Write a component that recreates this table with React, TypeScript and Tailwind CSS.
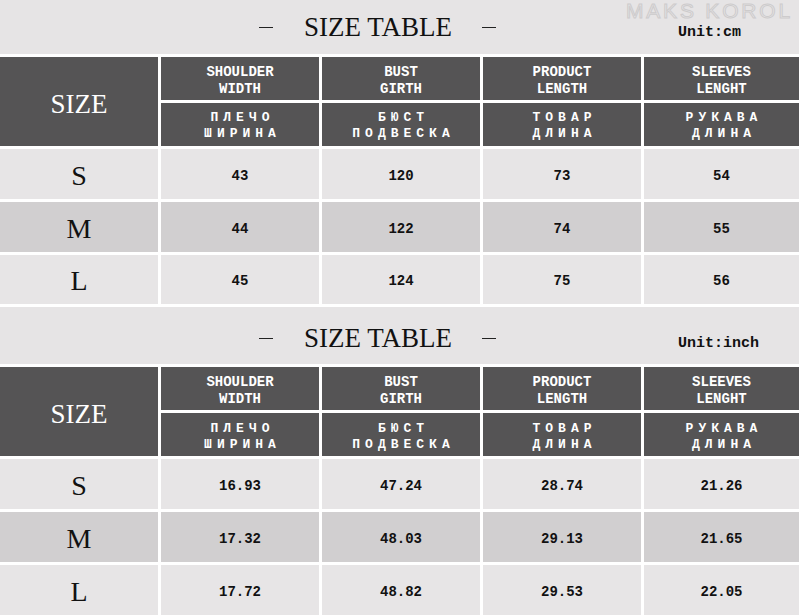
import React from 'react';

interface Column {
  en: [string, string];
  ru: [string, string];
}

interface SizeRow {
  size: string;
  values: string[];
}

const columns: Column[] = [
  { en: ['SHOULDER', 'WIDTH'], ru: ['ПЛЕЧО', 'ШИРИНА'] },
  { en: ['BUST', 'GIRTH'], ru: ['БЮСТ', 'ПОДВЕСКА'] },
  { en: ['PRODUCT', 'LENGTH'], ru: ['ТОВАР', 'ДЛИНА'] },
  { en: ['SLEEVES', 'LENGHT'], ru: ['РУКАВА', 'ДЛИНА'] },
];

const cmRows: SizeRow[] = [
  { size: 'S', values: ['43', '120', '73', '54'] },
  { size: 'M', values: ['44', '122', '74', '55'] },
  { size: 'L', values: ['45', '124', '75', '56'] },
];

const inchRows: SizeRow[] = [
  { size: 'S', values: ['16.93', '47.24', '28.74', '21.26'] },
  { size: 'M', values: ['17.32', '48.03', '29.13', '21.65'] },
  { size: 'L', values: ['17.72', '48.82', '29.53', '22.05'] },
];

const serif = "font-['Liberation_Serif','Times_New_Roman',serif]";
const mono = "font-['Liberation_Mono','Courier_New',monospace]";

function TitleBand({ unit, tall }: { unit: string; tall?: boolean }) {
  return (
    <div
      className={`relative flex items-center bg-[#e6e4e5] pl-[259px] ${
        tall ? 'h-[58px] pt-[6px]' : 'h-[55px] pt-[1px]'
      }`}
    >
      <div className="flex items-center">
        <div className="h-[1.5px] w-[14px] bg-[#222]" />
        <div className={`${serif} ml-[31px] mr-[30px] text-[27px] leading-none text-[#111]`}>
          SIZE TABLE
        </div>
        <div className="h-[1.5px] w-[14px] bg-[#222]" />
      </div>
      <div className={`${mono} ml-auto mt-[10px] w-[121px] text-[15px] font-bold leading-none text-[#111]`}>
        {unit}
      </div>
      {!tall && (
        <div className="absolute left-[626px] top-0 font-['Liberation_Sans',Arial,sans-serif] text-[21px] leading-none tracking-[2.8px] text-transparent [-webkit-text-stroke:1px_#cdcbcc]">
          MAKS KOROL
        </div>
      )}
    </div>
  );
}

function SizeTable({ rows, lastRow }: { rows: SizeRow[]; lastRow: string }) {
  return (
    <div
      className={`grid grid-cols-[158px_158px_158px_158px_155px] gap-[3px] bg-white ${
        lastRow === '49px'
          ? 'grid-rows-[43px_43px_50px_50px_49px]'
          : 'grid-rows-[43px_43px_50px_50px_50px]'
      }`}
    >
      <div className={`${serif} row-span-2 flex items-center justify-center bg-[#555455] pt-[5px] text-[27px] text-white`}>
        SIZE
      </div>
      {columns.map((c) => (
        <div
          key={c.en[0]}
          className={`${mono} flex flex-col items-center justify-center bg-[#555455] pt-[5px] text-[14px] font-bold leading-[17px] text-white`}
        >
          <span>{c.en[0]}</span>
          <span>{c.en[1]}</span>
        </div>
      ))}
      {columns.map((c) => (
        <div
          key={c.ru[0] + c.ru[1]}
          className={`${mono} flex flex-col items-center justify-center bg-[#555455] pl-[5px] pt-[4px] text-[13px] font-bold leading-[16px] tracking-[5px] text-white`}
        >
          <span>{c.ru[0]}</span>
          <span>{c.ru[1]}</span>
        </div>
      ))}
      {rows.map((r) => {
        const bg = r.size === 'M' ? 'bg-[#d1cfd0]' : 'bg-[#e7e5e6]';
        return (
          <React.Fragment key={r.size}>
            <div className={`${serif} ${bg} flex items-center justify-center pt-[4px] text-[28px] text-[#111]`}>
              {r.size}
            </div>
            {r.values.map((v, i) => (
              <div
                key={i}
                className={`${mono} ${bg} flex items-center justify-center pt-[5px] text-[14px] font-bold text-[#111]`}
              >
                {v}
              </div>
            ))}
          </React.Fragment>
        );
      })}
    </div>
  );
}

export default function App() {
  return (
    <div className="flex h-[615px] w-[799px] flex-col gap-[3px] overflow-hidden bg-white">
      <TitleBand unit="Unit:cm" />
      <SizeTable rows={cmRows} lastRow="49px" />
      <TitleBand unit="Unit:inch" tall />
      <SizeTable rows={inchRows} lastRow="50px" />
    </div>
  );
}
